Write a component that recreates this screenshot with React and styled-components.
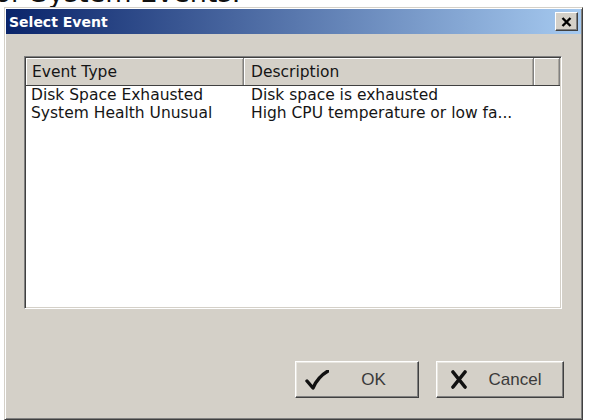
import React from "react";
import styled, { createGlobalStyle } from "styled-components";

const Global = createGlobalStyle`
  body {
    margin: 0;
    background: #ffffff;
  }
`;

const Page = styled("div")`
  width: 590px;
  height: 420px;
  overflow: hidden;
  background: #ffffff;
`;

const Caption = styled("div")`
  height: 7px;
  overflow: hidden;
  font-family: "DejaVu Sans", sans-serif;
  font-size: 27px;
  line-height: 27px;
  color: #111111;
  white-space: nowrap;
  & > span {
    display: block;
    margin-top: -21px;
    margin-left: -20px;
  }
`;

const Dialog = styled("div")`
  margin-left: 4px;
  width: 575px;
  height: 409px;
  padding: 1px;
  background: #d4d0c8;
  border: 1px solid;
  border-color: #d4d0c8 #404040 #404040 #d4d0c8;
  box-shadow: inset 1px 1px #ffffff, inset -1px -1px #808080;
  display: flex;
  flex-direction: column;
`;

const TitleBar = styled("div")`
  height: 25px;
  flex: none;
  display: flex;
  align-items: center;
  justify-content: space-between;
  padding: 0 3px 0 3px;
  background: linear-gradient(to right, #0a246a, #a6caf0);
  font-family: "DejaVu Sans", sans-serif;
  font-weight: bold;
  font-size: 14px;
  color: #ffffff;
`;

const CloseButton = styled("div")`
  width: 21px;
  height: 17px;
  background: #d4d0c8;
  border: 1px solid;
  border-color: #ffffff #404040 #404040 #ffffff;
  box-shadow: inset -1px -1px #808080;
  display: flex;
  align-items: center;
  justify-content: center;
`;

const Body = styled("div")`
  flex: 1;
  display: flex;
  flex-direction: column;
  padding: 22px 17px 20px 18px;
`;

const ListBox = styled("div")`
  width: 534px;
  height: 249px;
  background: #ffffff;
  border: 1px solid;
  border-color: #808080 #ffffff #ffffff #808080;
  box-shadow: inset 1px 1px #404040, inset -1px -1px #d4d0c8;
  padding: 1px;
  font-family: "DejaVu Sans", sans-serif;
  font-size: 15.5px;
  color: #151515;
`;

const HeaderRow = styled("div")`
  display: flex;
  height: 27px;
  border-bottom: 1px solid #404040;
  background: #d4d0c8;
`;

const HeaderCell = styled("div")`
  width: ${(p) => p.$w}px;
  flex: ${(p) => (p.$fill ? 1 : "none")};
  display: flex;
  align-items: center;
  padding-left: ${(p) => p.$pad}px;
  box-sizing: border-box;
  border-right: 1px solid #808080;
  box-shadow: inset 1px 1px #ffffff, inset -1px 0 #a8a49c;
`;

const Row = styled("div")`
  display: flex;
  height: 18px;
  align-items: center;
  white-space: nowrap;
`;

const Cell = styled("div")`
  width: ${(p) => p.$w}px;
  padding-left: ${(p) => p.$pad}px;
  box-sizing: border-box;
  overflow: hidden;
`;

const ButtonBar = styled("div")`
  margin-top: auto;
  display: flex;
  justify-content: flex-end;
  gap: 17px;
`;

const Button = styled("div")`
  width: ${(p) => p.$w}px;
  height: 37px;
  box-sizing: border-box;
  display: flex;
  align-items: center;
  padding-left: ${(p) => p.$inset}px;
  background: #d4d0c8;
  border: 1px solid;
  border-color: #ffffff #404040 #404040 #ffffff;
  box-shadow: inset -1px -1px #808080, inset 1px 1px #e8e6e0;
  font-family: "Liberation Sans", Arial, sans-serif;
  font-size: 17px;
  color: #3a3a3a;
`;

const ButtonLabel = styled("span")`
  flex: 1;
  text-align: center;
`;

const columns = [
  { w: 218, pad: 6, title: "Event Type" },
  { w: 290, pad: 7, title: "Description" },
];

const events = [
  ["Disk Space Exhausted", "Disk space is exhausted"],
  ["System Health Unusual", "High CPU temperature or low fa..."],
];

function CloseIcon() {
  return (
    <svg width="11" height="10" viewBox="0 0 11 10">
      <path d="M1.5 1 L9.5 9 M9.5 1 L1.5 9" stroke="#000" strokeWidth="2.4" />
    </svg>
  );
}

function CheckIcon() {
  return (
    <svg width="24" height="20" viewBox="0 0 24 20">
      <path
        d="M2 11 L8 18 C11 11 16 5 23 1"
        fill="none"
        stroke="#111"
        strokeWidth="3.4"
        strokeLinecap="round"
        strokeLinejoin="round"
      />
    </svg>
  );
}

function CrossIcon() {
  return (
    <svg width="16" height="19" viewBox="0 0 16 19">
      <path d="M2 2 L14 17 M14 2 L2 17" stroke="#111" strokeWidth="3.6" strokeLinecap="round" />
    </svg>
  );
}

export default function App() {
  return (
    <Page>
      <Global />
      <Caption>
        <span>For System Events:</span>
      </Caption>
      <Dialog>
        <TitleBar>
          <span>Select Event</span>
          <CloseButton>
            <CloseIcon />
          </CloseButton>
        </TitleBar>
        <Body>
          <ListBox>
            <HeaderRow>
              {columns.map((c) => (
                <HeaderCell key={c.title} $w={c.w} $pad={c.pad}>
                  {c.title}
                </HeaderCell>
              ))}
              <HeaderCell $fill />
            </HeaderRow>
            {events.map((ev) => (
              <Row key={ev[0]}>
                {ev.map((text, i) => (
                  <Cell key={i} $w={columns[i].w} $pad={i === 0 ? 5 : 7}>
                    {text}
                  </Cell>
                ))}
              </Row>
            ))}
          </ListBox>
          <ButtonBar>
            <Button $w={124} $inset={9}>
              <CheckIcon />
              <ButtonLabel>OK</ButtonLabel>
            </Button>
            <Button $w={128} $inset={14}>
              <CrossIcon />
              <ButtonLabel>Cancel</ButtonLabel>
            </Button>
          </ButtonBar>
        </Body>
      </Dialog>
    </Page>
  );
}
